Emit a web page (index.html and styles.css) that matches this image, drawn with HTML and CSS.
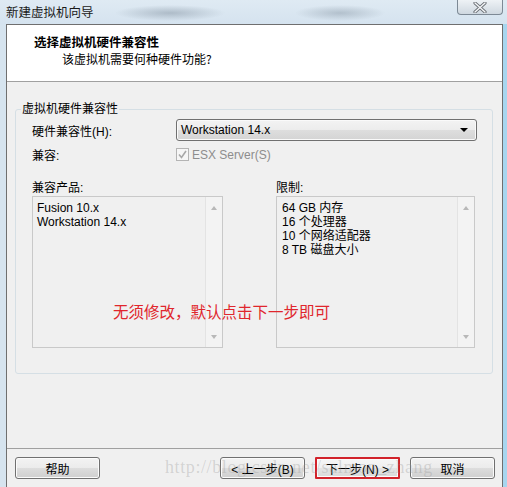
FILE: index.html
```html
<!DOCTYPE html>
<html lang="zh-CN">
<head>
    <meta charset="UTF-8">
    <title>新建虚拟机向导</title>
    <link rel="stylesheet" href="styles.css">
</head>
<body>
    <div class="titlebar">
        <span class="title">新建虚拟机向导</span>
        <div class="close-btn">
            <svg width="14" height="11" viewBox="0 0 14 11">
                <path d="M2 1 L12 10 M12 1 L2 10" stroke="#6a6f75" stroke-width="3.2" stroke-linecap="round"/>
                <path d="M2 1 L12 10 M12 1 L2 10" stroke="#f4f6f8" stroke-width="1.4" stroke-linecap="round"/>
            </svg>
        </div>
    </div>

    <div class="window">
        <div class="header">
            <div class="header-title">选择虚拟机硬件兼容性</div>
            <div class="header-sub">该虚拟机需要何种硬件功能?</div>
        </div>

        <div class="main">
            <fieldset class="group">
                <legend>虚拟机硬件兼容性</legend>
                <div class="group-body">
                    <div class="row">
                        <span class="row-label">硬件兼容性(H):</span>
                        <div class="select">
                            <span>Workstation 14.x</span>
                            <span class="select-arrow"></span>
                        </div>
                    </div>
                    <div class="row row-check">
                        <span class="row-label">兼容:</span>
                        <span class="checkbox">
                            <svg width="11" height="11" viewBox="0 0 11 11">
                                <path d="M2 5.5 L4.5 8.5 L9 2" stroke="#a8a8a8" stroke-width="1.6" fill="none"/>
                            </svg>
                        </span>
                        <span class="disabled-text">ESX Server(S)</span>
                    </div>

                    <div class="lists">
                        <div class="list-col list-left">
                            <div class="list-label">兼容产品:</div>
                            <div class="listbox">
                                <div class="list-items">
                                    <div>Fusion 10.x</div>
                                    <div>Workstation 14.x</div>
                                </div>
                                <div class="scrollbar">
                                    <span class="arrow-up"></span>
                                    <span class="arrow-down"></span>
                                </div>
                            </div>
                        </div>
                        <div class="list-col list-right">
                            <div class="list-label">限制:</div>
                            <div class="listbox">
                                <div class="list-items">
                                    <div>64 GB 内存</div>
                                    <div>16 个处理器</div>
                                    <div>10 个网络适配器</div>
                                    <div>8 TB 磁盘大小</div>
                                </div>
                                <div class="scrollbar">
                                    <span class="arrow-up"></span>
                                    <span class="arrow-down"></span>
                                </div>
                            </div>
                        </div>
                    </div>
                </div>
            </fieldset>
            <div class="note">无须修改，默认点击下一步即可</div>
        </div>

        <div class="footer">
            <button class="btn">帮助</button>
            <div class="footer-right">
                <button class="btn">&lt; 上一步(B)</button>
                <button class="btn btn-next">下一步(N) &gt;</button>
                <button class="btn">取消</button>
            </div>
            <div class="watermark">http://blog.csdn.net/salmon_zhang</div>
        </div>
    </div>
</body>
</html>
```

FILE: styles.css
```css
* {
    box-sizing: border-box;
    margin: 0;
    padding: 0;
}

body {
    width: 507px;
    height: 487px;
    overflow: hidden;
    font-family: "Liberation Sans", "Noto Sans CJK SC", sans-serif;
    font-size: 12px;
    color: #000;
    background: linear-gradient(to right, #d6e4ef 0, #d6e4ef 503px, #a7d6ef 503px);
}

/* title bar */
.titlebar {
    height: 24px;
    display: flex;
    justify-content: space-between;
    align-items: flex-start;
    background:
        radial-gradient(ellipse 55px 8px at 170px 13px, rgba(120, 135, 150, 0.45), transparent),
        radial-gradient(ellipse 45px 8px at 340px 13px, rgba(120, 135, 150, 0.4), transparent),
        linear-gradient(#dfeaf3, #d5e3ef);
}

.title {
    padding-left: 6px;
    line-height: 24px;
    font-size: 12.5px;
    color: #1a1a1a;
    font-family: "Noto Sans CJK SC", sans-serif;
}

.close-btn {
    width: 46px;
    height: 15px;
    margin-right: 4px;
    border: 1px solid #7d8995;
    border-top: none;
    border-radius: 0 0 4px 4px;
    background: linear-gradient(#eef2f5, #cfd8e0);
    display: flex;
    justify-content: center;
    align-items: center;
}

/* window */
.window {
    margin-left: 6px;
    width: 497px;
    height: 463px;
    border: 1px solid #6f6f6f;
    border-bottom: none;
    background-color: #f0f0f0;
}

.header {
    height: 57px;
    background-color: #fff;
    border-bottom: 1px solid #a0a0a0;
    padding-top: 9px;
    font-family: "Noto Sans CJK SC", sans-serif;
}

.header-title {
    padding-left: 27px;
    font-weight: bold;
    font-size: 12.5px;
    line-height: 15px;
}

.header-sub {
    padding-left: 55px;
    margin-top: 3px;
    line-height: 14px;
}

.main {
    position: relative;
    height: 366px;
    padding: 20px 9px 0 8px;
}

.group {
    border: 1px solid #d5dfe5;
    border-radius: 3px;
    padding: 0;
}

.group legend {
    margin-left: 5px;
    padding: 0 1px;
    line-height: 14px;
}

.group-body {
    padding: 3px 15px 25px 16px;
}

.row {
    display: flex;
    align-items: center;
    height: 22px;
}

.row-label {
    width: 144px;
    flex-shrink: 0;
}

.select {
    flex: 1;
    height: 22px;
    border: 1px solid #707070;
    border-radius: 3px;
    background: linear-gradient(#f3f3f3 0%, #ececec 50%, #dedede 50%, #d4d4d4 100%);
    display: flex;
    align-items: center;
    justify-content: space-between;
    padding: 0 8px 0 4px;
    box-shadow: inset 0 0 0 1px #fafafa;
}

.select-arrow {
    width: 0;
    height: 0;
    border-left: 4px solid transparent;
    border-right: 4px solid transparent;
    border-top: 4px solid #000;
}

.row-check {
    height: 13px;
    margin-top: 7px;
}

.checkbox {
    width: 13px;
    height: 13px;
    border: 1px solid #b4b4b4;
    background: #f6f6f6;
    display: flex;
    align-items: center;
    justify-content: center;
    margin-right: 3px;
}

.disabled-text {
    color: #8d8d8d;
}

.lists {
    display: flex;
    margin-top: 20px;
}

.list-left {
    width: 191px;
}

.list-right {
    width: 199px;
    margin-left: 53px;
}

.list-label {
    line-height: 14px;
    margin-bottom: 1px;
}

.listbox {
    height: 152px;
    border: 1px solid #c9c9c9;
    display: flex;
}

.list-items {
    flex: 1;
    padding: 4px 0 0 4px;
    line-height: 14px;
}

.list-right .list-items {
    padding-left: 5px;
}

.scrollbar {
    width: 17px;
    border-left: 1px solid #e3e3e3;
    background: #f3f3f3;
    display: flex;
    flex-direction: column;
    justify-content: space-between;
    align-items: center;
    padding: 9px 0 8px;
}

.arrow-up,
.arrow-down {
    width: 0;
    height: 0;
    border-left: 3.5px solid transparent;
    border-right: 3.5px solid transparent;
}

.arrow-up {
    border-bottom: 4px solid #b8b8b8;
}

.arrow-down {
    border-top: 4px solid #b8b8b8;
}

.note {
    position: absolute;
    left: 106px;
    top: 219px;
    font-family: "Noto Sans CJK SC", sans-serif;
    font-size: 15.5px;
    line-height: 20px;
    color: #e0262c;
}

/* footer */
.footer {
    position: relative;
    border-top: 1px solid #a0a0a0;
    display: flex;
    justify-content: space-between;
    padding: 8px 7px 0 8px;
}

.footer-right {
    display: flex;
    gap: 10px;
}

.btn {
    width: 85px;
    height: 22px;
    border: 1px solid #707070;
    border-radius: 3px;
    background: linear-gradient(#f3f3f3 0%, #ebebeb 50%, #dddddd 50%, #cfcfcf 100%);
    box-shadow: inset 0 0 0 1px #fbfbfb;
    font-family: "Liberation Sans", "Noto Sans CJK SC", sans-serif;
    font-size: 12px;
    color: #000;
}

.btn-next {
    border: 2px solid #d2232b;
    border-radius: 1px;
    background: linear-gradient(#f6f6f6 0%, #efefef 50%, #e4e4e4 50%, #dadada 100%);
}

.watermark {
    position: absolute;
    left: 158px;
    top: 8px;
    font-family: "Liberation Serif", serif;
    font-size: 18px;
    line-height: 20px;
    letter-spacing: 0.6px;
    color: rgba(150, 150, 150, 0.32);
    pointer-events: none;
}
```
